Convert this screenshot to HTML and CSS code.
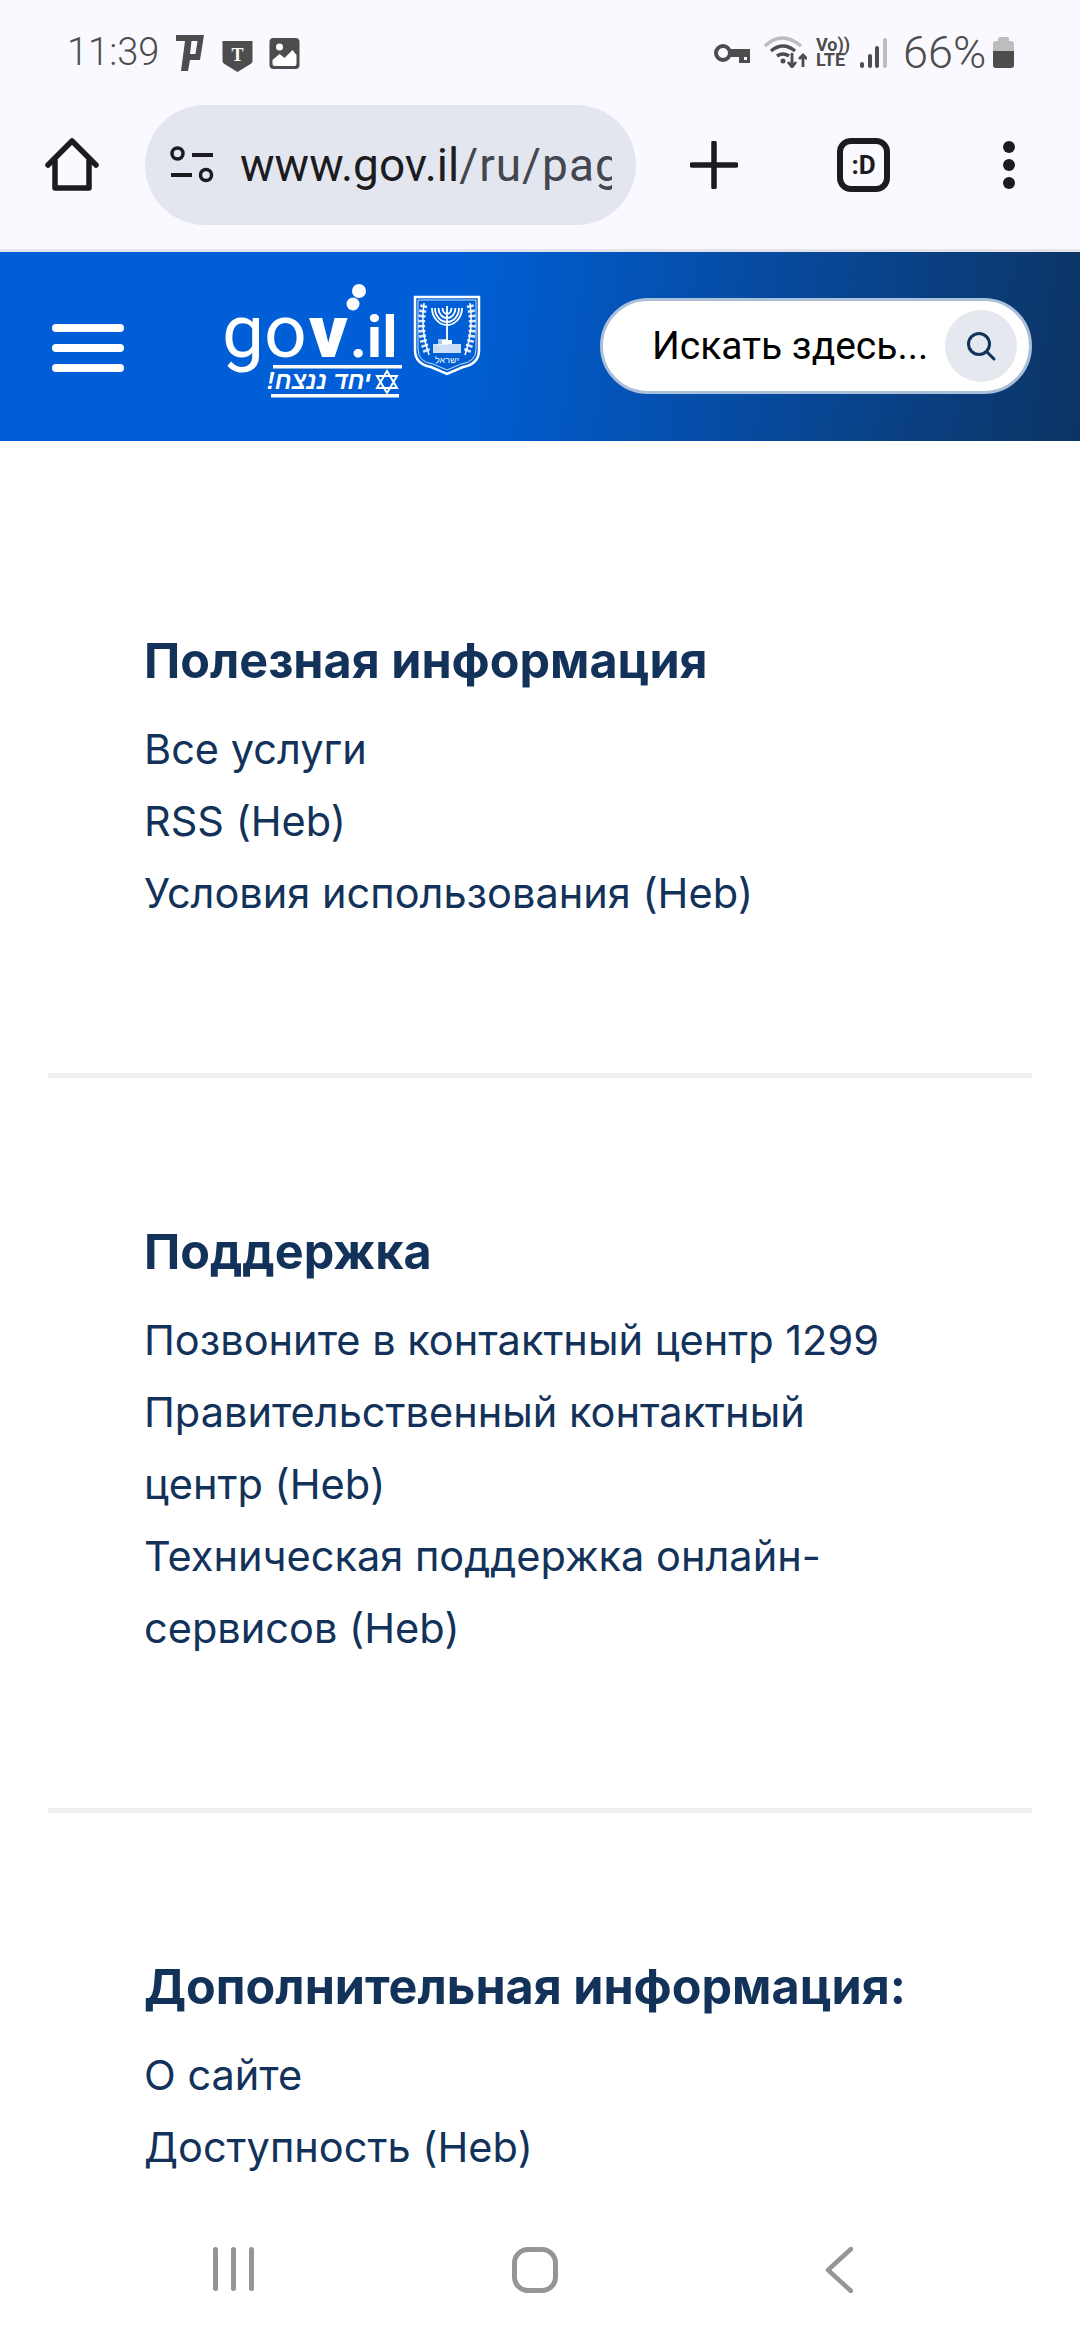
FILE: index.html

```html
<!DOCTYPE html>
<html lang="ru">
<head>
  <meta charset="UTF-8">
  <meta name="viewport" content="width=device-width, initial-scale=1.0">
  <title>gov.il</title>
  <link rel="stylesheet" href="styles.css">
</head>
<body>
  <div class="phone">
    <div class="chrome">
      <!-- status bar -->
      <div class="status-bar">
        <div class="status-left">
          <span class="clock">11:39</span>
          <svg class="ic-p" viewBox="0 0 30 38"><path d="M1 1H29L25 26H15L13 37H6L10 7H1Z M16.500 7L15 20H20.500L22.500 7Z" fill="#4d4d4d" fill-rule="evenodd"/></svg>
          <svg class="ic-shield" viewBox="0 0 30 32"><path d="M0 1H30V21Q30 23 28 24L15 32L2 24Q0 23 0 21Z" fill="#4d4d4d"/><text x="15" y="21" class="shield-t">T</text></svg>
          <svg class="ic-photo" viewBox="0 0 30 31"><rect width="30" height="31" rx="4" fill="#4d4d4d"/><path d="M3 22L10 16L15 20L23 12L27 17V26Q27 28 25 28H5Q3 28 3 26Z" fill="#fff"/><circle cx="10" cy="9" r="3.500" fill="#fff"/></svg>
        </div>
        <div class="status-right">
          <svg class="ic-key" viewBox="0 0 36 21"><circle cx="9" cy="10" r="7" fill="none" stroke="#4d4d4d" stroke-width="4"/><path d="M16 6H36V20H25V14H16Z" fill="#4d4d4d"/><path d="M30 14V17H33V14Z" fill="#f9f9ff"/></svg>
          <svg class="ic-wifi" viewBox="0 0 43 32">
            <path d="M1 10Q18 -6 37 10" fill="none" stroke="#bdbdbd" stroke-width="3.500"/>
            <path d="M7 15Q19 5 31 15" fill="none" stroke="#4d4d4d" stroke-width="3.500"/>
            <path d="M13 20Q19 16 25 20" fill="none" stroke="#4d4d4d" stroke-width="3.500"/>
            <circle cx="19" cy="25" r="2.500" fill="#4d4d4d"/>
            <path d="M28 17V31M24 26L28 31L32 26" fill="none" stroke="#4d4d4d" stroke-width="2.800"/>
            <path d="M39 31V19M35 23L39 19L43 23" fill="none" stroke="#4d4d4d" stroke-width="2.800"/>
          </svg>
          <div class="volte">Vo))<br>LTE</div>
          <div class="signal">
            <i class="bar-1"></i><i class="bar-2"></i><i class="bar-3"></i><i class="bar-4"></i>
          </div>
          <span class="battery-pct">66%</span>
          <div class="battery"><div class="battery-fill"></div></div>
        </div>
      </div>

      <!-- browser toolbar -->
      <div class="toolbar">
        <svg class="ic-home" viewBox="0 0 54 54"><path d="M3 27L27 3L51 27M10 22V50H44V22" fill="none" stroke="#1b1b20" stroke-width="5.500" stroke-linecap="round" stroke-linejoin="round"/></svg>
        <div class="url-pill">
          <svg class="ic-tune" viewBox="0 0 44 38">
            <circle cx="7.500" cy="7.500" r="5.500" fill="none" stroke="#1b1b20" stroke-width="3.500"/>
            <path d="M22 9H43M1 29H22" stroke="#1b1b20" stroke-width="4"/>
            <circle cx="36" cy="29" r="5.500" fill="none" stroke="#1b1b20" stroke-width="3.500"/>
          </svg>
          <div class="url-text"><span class="url-host">www.gov.il</span><span class="url-path">/ru/pages</span></div>
        </div>
        <svg class="ic-plus" viewBox="0 0 48 48"><path d="M24 2V46M2 24H46" stroke="#1b1b20" stroke-width="5.500" stroke-linecap="round"/></svg>
        <div class="tab-count">:D</div>
        <div class="menu-dots"><i></i><i></i><i></i></div>
      </div>
    </div>

    <!-- site header -->
    <header class="site-header">
      <div class="hamburger"><i></i><i></i><i></i></div>
      <svg class="logo" viewBox="220 282 262 118">
        <text y="357"><tspan class="logo-light" x="222">go</tspan><tspan class="logo-v" x="309">v</tspan><tspan class="logo-il" x="350">.il</tspan></text>
        <circle cx="359" cy="291" r="7" fill="#fff"/>
        <circle cx="353" cy="304" r="6.500" fill="#fff"/>
        <rect x="273" y="365" width="129" height="3.500" fill="#fff"/>
        <text class="logo-he" x="371" y="389" direction="rtl">יחד ננצח!</text>
        <path d="M387 371L397 388H377ZM387 393L397 376H377Z" fill="none" stroke="#fff" stroke-width="2"/>
        <rect x="271" y="394" width="128" height="3.500" fill="#fff"/>
        <!-- emblem -->
        <path d="M415 297H479V350Q479 364 463 367L447 374L431 367Q415 364 415 350Z" fill="none" stroke="#fff" stroke-width="2.500"/>
        <path d="M418 300H476V349Q476 362 461 364L447 370L433 364Q418 362 418 349Z" fill="none" stroke="#fff" stroke-width=".8"/>
        <path d="M432 308a15 17 0 0 0 30 0M435 308a12 14 0 0 0 24 0M438.500 308a8.500 10 0 0 0 17 0M442.500 308a4.500 6 0 0 0 9 0M447 306V340" fill="none" stroke="#fff" stroke-width="1.800"/>
        <path d="M442 340H452V344H442Z" fill="#fff"/>
        <rect x="433" y="344" width="28" height="9" fill="#fff" opacity=".8"/>
        <rect x="438" y="339" width="10" height="6" fill="#fff" opacity=".65"/>
        <path d="M424 303Q420 330 429 355M470 303Q474 330 465 355" fill="none" stroke="#fff" stroke-width="1.500"/>
        <path d="M424 305Q418 330 427 352M470 305Q476 330 467 352" fill="none" stroke="#fff" stroke-width="7" stroke-dasharray="2.500 2.500" opacity=".85"/>
        <text class="logo-state" x="447" y="363" direction="rtl">ישראל</text>
      </svg>
      <div class="search-box">
        <span class="search-text">Искать здесь...</span>
        <div class="search-btn">
          <svg viewBox="0 0 32 32"><circle cx="14" cy="14" r="10.500" fill="none" stroke="#12325a" stroke-width="3"/><path d="M22 22L29 29" stroke="#12325a" stroke-width="3" stroke-linecap="round"/></svg>
        </div>
      </div>
    </header>

    <main class="content">
      <section class="link-group">
        <h3>Полезная информация</h3>
        <ul>
          <li><a href="#">Все услуги</a></li>
          <li><a href="#">RSS (Heb)</a></li>
          <li><a href="#">Условия использования (Heb)</a></li>
        </ul>
      </section>
      <section class="link-group">
        <h3>Поддержка</h3>
        <ul>
          <li><a href="#">Позвоните в контактный центр 1299</a></li>
          <li><a href="#">Правительственный контактный<br>центр (Heb)</a></li>
          <li><a href="#">Техническая поддержка онлайн-<br>сервисов (Heb)</a></li>
        </ul>
      </section>
      <section class="link-group">
        <h3>Дополнительная информация:</h3>
        <ul>
          <li><a href="#">О сайте</a></li>
          <li><a href="#">Доступность (Heb)</a></li>
        </ul>
      </section>
    </main>

    <!-- android nav -->
    <nav class="nav-bar">
      <div class="nav-recents"><i></i><i></i><i></i></div>
      <div class="nav-home"></div>
      <svg class="nav-back" viewBox="0 0 28 46"><path d="M26 2L3 23L26 44" fill="none" stroke="#959595" stroke-width="4.500" stroke-linecap="round" stroke-linejoin="round"/></svg>
    </nav>
  </div>
</body>
</html>
```

FILE: styles.css

```css
:root {
  --chrome-bg: #f9f9ff;
  --ink: #1b1b20;
  --status: #4d4d4d;
  --navy: #12325a;
  --nav-grey: #959595;
}

* {
  box-sizing: border-box;
}

body {
  margin: 0;
  background: #fff;
  font-family: Roboto, 'Noto Sans', sans-serif;
}

.phone {
  width: 1080px;
  height: 2340px;
  display: flex;
  flex-direction: column;
  overflow: hidden;
}

.chrome {
  height: 252px;
  flex: none;
  background: var(--chrome-bg);
  border-bottom: 3px solid #e3e3e9;
}

/* status bar */
.status-bar {
  height: 105px;
  padding: 34px 66px 0 67px;
  display: flex;
  justify-content: space-between;
  align-items: flex-start;
  color: var(--status);
}

.status-left,
.status-right {
  display: flex;
  align-items: flex-start;
}

.clock {
  font-size: 38px;
  font-weight: 300;
  line-height: 36px;
  width: 108px;
}

.ic-p {
  width: 30px;
  height: 38px;
  margin-right: 17px;
}

.ic-shield {
  width: 31px;
  height: 32px;
  margin: 6px 16px 0 0;
}

.shield-t {
  font-family: 'Liberation Serif', serif;
  font-size: 18px;
  font-weight: 700;
  fill: #fff;
  text-anchor: middle;
}

.ic-photo {
  width: 31px;
  height: 31px;
  margin-top: 4px;
}

.ic-key {
  width: 36px;
  height: 21px;
  margin: 9px 14px 0 0;
}

.ic-wifi {
  width: 43px;
  height: 32px;
  margin: 2px 9px 0 0;
}

.volte {
  width: 30px;
  margin: 3px 14px 0 0;
  font-size: 18px;
  font-weight: 700;
  line-height: 15px;
  white-space: nowrap;
}

.signal {
  width: 27px;
  height: 30px;
  margin: 4px 16px 0 0;
  display: flex;
  align-items: flex-end;
  justify-content: space-between;
}

.signal i {
  width: 4px;
  border-radius: 2px;
  background: var(--status);
}

.bar-1 { height: 6px; }
.bar-2 { height: 14px; }
.bar-3 { height: 22px; }
.signal .bar-4 { height: 30px; background: #bdbdbd; }

.battery-pct {
  width: 82px;
  margin-right: 8px;
  font-size: 45px;
  font-weight: 300;
  line-height: 38px;
  white-space: nowrap;
}

.battery {
  position: relative;
  width: 21px;
  height: 27px;
  margin-top: 7px;
  background: #bdbdbd;
  border-radius: 3px;
  display: flex;
  align-items: flex-end;
}

.battery::before {
  content: "";
  position: absolute;
  left: 5px;
  top: -4px;
  width: 11px;
  height: 4px;
  border-radius: 2px 2px 0 0;
  background: #bdbdbd;
}

.battery-fill {
  width: 100%;
  height: 17px;
  background: var(--status);
  border-radius: 0 0 3px 3px;
}

/* toolbar */
.toolbar {
  height: 120px;
  display: flex;
  align-items: center;
}

.ic-home {
  width: 54px;
  height: 54px;
  margin: 0 46px 0 45px;
}

.url-pill {
  width: 491px;
  height: 120px;
  border-radius: 60px;
  background: #e3e6ef;
  display: flex;
  align-items: center;
  padding: 0 24px 0 25px;
}

.ic-tune {
  width: 44px;
  height: 38px;
  flex: none;
  margin-right: 26px;
}

.url-text {
  overflow: hidden;
  white-space: nowrap;
  font-size: 46px;
  font-weight: 400;
  line-height: 60px;
}

.url-host {
  color: var(--ink);
}

.url-path {
  color: #44474f;
  letter-spacing: 1px;
}

.ic-plus {
  width: 48px;
  height: 48px;
  margin: 0 99px 0 54px;
}

.tab-count {
  width: 53px;
  height: 54px;
  border: 6px solid var(--ink);
  border-radius: 14px;
  font-size: 26px;
  font-weight: 700;
  line-height: 42px;
  text-align: center;
  color: var(--ink);
}

.menu-dots {
  margin-left: 113px;
  display: flex;
  flex-direction: column;
  gap: 6px;
}

.menu-dots i {
  width: 12px;
  height: 12px;
  border-radius: 50%;
  background: var(--ink);
}

/* site header */
.site-header {
  height: 189px;
  flex: none;
  display: flex;
  align-items: center;
  padding: 0 48px 0 52px;
  background: linear-gradient(98deg, #005fd6 0%, #005fd6 42%, #0d3463 100%);
}

.hamburger {
  width: 72px;
  display: flex;
  flex-direction: column;
  gap: 12px;
  margin-top: 2px;
}

.hamburger i {
  height: 8px;
  border-radius: 4px;
  background: #fff;
}

.logo {
  width: 262px;
  height: 118px;
  align-self: flex-start;
  margin: 30px 0 0 96px;
  overflow: visible;
}

.logo-light {
  font-size: 75px;
  font-weight: 400;
  fill: #fff;
}

.logo-v {
  font-size: 75px;
  font-weight: 900;
  fill: #fff;
}

.logo-il {
  font-size: 58px;
  font-weight: 700;
  fill: #fff;
}

.logo-he {
  font-family: 'Liberation Sans', 'DejaVu Sans', sans-serif;
  font-size: 24px;
  font-weight: 700;
  font-style: italic;
  fill: #fff;
}

.logo-state {
  font-family: 'Liberation Sans', 'DejaVu Sans', sans-serif;
  font-size: 9px;
  fill: #fff;
  text-anchor: middle;
}

.search-box {
  width: 432px;
  height: 96px;
  margin-left: auto;
  margin-top: -1px;
  border: 3px solid #a9bfda;
  border-radius: 48px;
  background: #fff;
  display: flex;
  align-items: center;
  justify-content: space-between;
  padding: 0 12px 0 49px;
}

.search-text {
  font-size: 39px;
  color: #000;
  white-space: nowrap;
}

.search-btn {
  width: 72px;
  height: 72px;
  flex: none;
  border-radius: 50%;
  background: #e5e8ee;
  display: flex;
  align-items: center;
  justify-content: center;
}

.search-btn svg {
  width: 32px;
  height: 32px;
}

/* footer link groups */
.content {
  flex: 1;
  overflow: hidden;
  padding: 0 48px;
  font-family: Inter, Roboto, sans-serif;
}

.link-group {
  padding: 144px 0 144px 96px;
  border-bottom: 5px solid #f0f0f0;
}

.link-group:first-child {
  padding-top: 190px;
}

.link-group:last-child {
  border-bottom: none;
}

.link-group h3 {
  margin: 0 0 22px;
  font-size: 48.500px;
  font-weight: 700;
  line-height: 60px;
  color: var(--navy);
}

.link-group ul {
  margin: 0;
  padding: 0;
  list-style: none;
}

.link-group li {
  font-size: 41.500px;
  line-height: 72px;
}

.link-group a {
  color: var(--navy);
  text-decoration: none;
}

/* android nav */
.nav-bar {
  height: 140px;
  flex: none;
  background: #fff;
  display: flex;
  align-items: flex-start;
  padding: 47px 0 0 213px;
}

.nav-recents {
  width: 41px;
  height: 44px;
  display: flex;
  justify-content: space-between;
}

.nav-recents i {
  width: 5px;
  border-radius: 3px;
  background: var(--nav-grey);
}

.nav-home {
  width: 46px;
  height: 46px;
  margin-left: 258px;
  border: 5px solid var(--nav-grey);
  border-radius: 16px;
}

.nav-back {
  width: 28px;
  height: 46px;
  margin-left: 267px;
}
```
